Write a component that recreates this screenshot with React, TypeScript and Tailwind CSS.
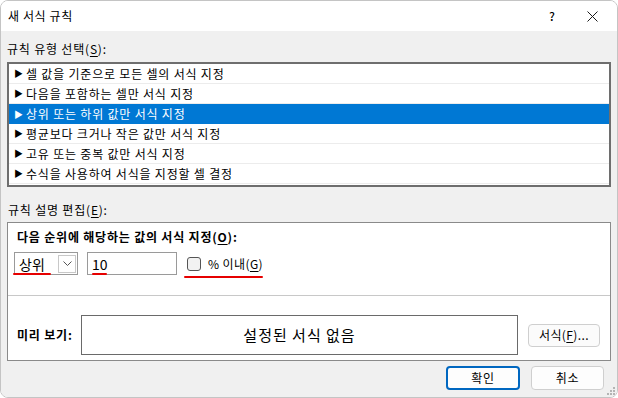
const font = { fontFamily: '"Noto Sans CJK KR", "Noto Sans", sans-serif' };

const rules = [
  "셀 값을 기준으로 모든 셀의 서식 지정",
  "다음을 포함하는 셀만 서식 지정",
  "상위 또는 하위 값만 서식 지정",
  "평균보다 크거나 작은 값만 서식 지정",
  "고유 또는 중복 값만 서식 지정",
  "수식을 사용하여 서식을 지정할 셀 결정",
];

const Mn = ({ c }: { c: string }) => (
  <span className="underline underline-offset-2 decoration-1">{c}</span>
);

const Grip = () => (
  <svg width="8" height="8" viewBox="0 0 8 8" className="absolute right-[2px] bottom-[2px]">
    {[
      [6, 0],
      [6, 3],
      [3, 3],
      [6, 6],
      [3, 6],
      [0, 6],
    ].map(([x, y], i) => (
      <rect key={i} x={x} y={y} width="2" height="2" fill="#b4b4b4" />
    ))}
  </svg>
);

export default function App() {
  return (
    <div className="w-[618px] h-[398px] bg-white" style={font}>
      <div className="relative w-full h-full flex flex-col rounded-[8px] overflow-hidden border border-[#c4c4c4] text-[12px] text-black tracking-[0.8px]">
        {/* title bar */}
        <div className="h-[30px] bg-white flex items-center pl-[7px] shrink-0">
          <span className="leading-none tracking-[0.6px]">새 서식 규칙</span>
          <div className="ml-auto flex items-center">
            <span className="text-[12px] font-medium mr-[32px] tracking-normal">?</span>
            <svg width="11" height="11" viewBox="0 0 11 11" className="mr-[19px]">
              <path d="M0.5 0.5 L10.5 10.5 M10.5 0.5 L0.5 10.5" stroke="#1a1a1a" strokeWidth="1" />
            </svg>
          </div>
        </div>

        {/* body */}
        <div className="flex-1 bg-[#f0f0f0] px-[6px] flex flex-col">
          <div className="pt-[10px] leading-[16px]">
            규칙 유형 선택(<Mn c="S" />):
          </div>

          <div className="mt-[5px] h-[125px] border-2 border-[#6e6e6e] bg-white flex flex-col">
            {rules.map((r, i) => {
              const sel = i === 2;
              return (
                <div
                  key={r}
                  className={
                    sel
                      ? "h-[20px] flex items-center pl-[5px] bg-[#0078d4] text-white"
                      : "h-[20px] flex items-center pl-[5px] border-b border-[#ececec]"
                  }
                >
                  <span className="text-[9px] w-[12px] leading-none">▶</span>
                  <span className="leading-none">{r}</span>
                </div>
              );
            })}
          </div>

          <div className="mt-[15px] leading-[16px] pl-[1px]">
            규칙 설명 편집(<Mn c="E" />):
          </div>

          {/* group box */}
          <div className="mt-[4px] h-[139px] border border-[#8a8a8a] bg-white flex flex-col">
            <div className="relative px-[6px]">
              <div className="pt-[6px] pl-[3px] font-bold leading-[16px]">
                다음 순위에 해당하는 값의 서식 지정(<Mn c="O" />):
              </div>
              <div className="mt-[7px] flex items-center tracking-normal">
                <div className="w-[64px] h-[23px] border border-[#9a9a9a] flex items-center justify-between pl-[4px] pr-[1px]">
                  <span className="text-[14px] leading-none">상위</span>
                  <div className="w-[18px] h-[18px] border border-[#c8c8c8] flex items-center justify-center">
                    <svg width="9" height="5" viewBox="0 0 9 5">
                      <path d="M0.5 0.5 L4.5 4.5 L8.5 0.5" fill="none" stroke="#555" strokeWidth="1" />
                    </svg>
                  </div>
                </div>
                <div className="ml-[9px] w-[90px] h-[23px] border border-[#9a9a9a] flex items-center pl-[4px]">
                  <span className="text-[14px] leading-none">10</span>
                </div>
                <div className="ml-[10px] w-[14px] h-[14px] rounded-[3px] border border-[#555] bg-[#f2f2f2]" />
                <span className="ml-[7px] leading-none tracking-[0.4px]">
                  % 이내(<Mn c="G" />)
                </span>
              </div>
              {/* red annotation marks */}
              <div className="absolute left-[5px] top-[50px] w-[38px] h-[2px] bg-[#e60000] rounded-full" />
              <div className="absolute left-[84px] top-[50px] w-[15px] h-[2px] bg-[#e60000] rounded-full" />
              <div className="absolute left-[176px] top-[53px] w-[79px] h-[2px] bg-[#e60000] rounded-full" />
            </div>

            <div className="mt-[20px] border-t border-[#c8c8c8]" />

            <div className="mt-[19px] flex items-center pl-[9px]">
              <span className="font-bold w-[64px]">미리 보기:</span>
              <div className="w-[437px] h-[40px] border border-[#6a6a6a] flex items-center justify-center">
                <span className="text-[15px] tracking-[1px]">설정된 서식 없음</span>
              </div>
              <button className="ml-[10px] w-[72px] h-[23px] rounded-[4px] border border-[#cfcfcf] bg-[#fbfbfb] flex items-center justify-center leading-none tracking-[0.4px]">
                서식(<Mn c="F" />)...
              </button>
            </div>
          </div>

          <div className="mt-[5px] flex justify-end gap-[11px] pr-[7px]">
            <button className="w-[74px] h-[24px] rounded-[4px] border-2 border-[#0067c0] bg-[#fdfdfd] flex items-center justify-center leading-none">
              확인
            </button>
            <button className="w-[73px] h-[24px] rounded-[4px] border border-[#cfcfcf] bg-[#fdfdfd] flex items-center justify-center leading-none">
              취소
            </button>
          </div>
        </div>
        <Grip />
      </div>
    </div>
  );
}
